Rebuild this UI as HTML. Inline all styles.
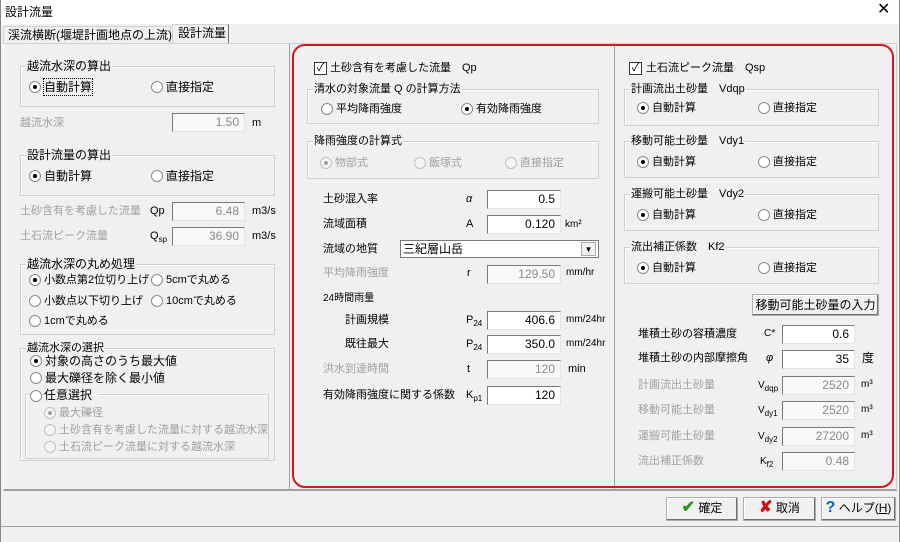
<!DOCTYPE html>
<html><head><meta charset="utf-8"><style>
*{box-sizing:border-box;margin:0;padding:0}
body{width:900px;height:542px;background:#f0f0f0;font-family:"Liberation Sans","Noto Sans CJK JP",sans-serif;font-size:11px;color:#000;position:relative;overflow:hidden}
.a{position:absolute;white-space:nowrap;line-height:16px}
.g{color:#a0a0a0}
.box{position:absolute;border:1px solid #d0d0d0;box-shadow:inset 1px 1px 0 #fff}
.lg{position:absolute;background:#f0f0f0;padding:0 1px;line-height:14px;white-space:nowrap}
.in{position:absolute;background:#fff;border:1px solid #7a7a7a;border-right-color:#e3e3e3;border-bottom-color:#e3e3e3;text-align:right;padding-right:5px;line-height:16px;height:19px;font-size:12px}
.in.d{color:#8a8a8a;background:#f8f8f8}
.r{position:absolute;width:12px;height:12px;border-radius:50%;border:1px solid #8a8a8a;background:#fff}
.r.on::after{content:"";position:absolute;left:3px;top:3px;width:4px;height:4px;border-radius:50%;background:#000}
.r.gd{border-color:#c0c0c0;background:#f4f4f4}
.r.gd.on::after{background:#a0a0a0}
.cb{position:absolute;width:13px;height:13px;border:1px solid #333;background:#fff;font-size:11px;line-height:11px;text-align:center}
.btn{position:absolute;border:1px solid #adadad;background:#f0f0f0;box-shadow:inset -1px -1px 0 #707070,inset 1px 1px 0 #fff;text-align:center;line-height:20px;font-size:12px}
</style></head><body>
<div style="position:absolute;left:0;top:0;width:900px;height:24px;background:#fff"></div>
<div class="a" style="left:5px;top:4px;font-size:12px">設計流量</div>
<div class="a" style="left:877px;top:2px;font-size:16px">✕</div>
<div style="position:absolute;left:0;top:0;width:1px;height:542px;background:#888"></div>
<div style="position:absolute;right:0;top:0;width:1px;height:542px;background:#888"></div>
<div style="position:absolute;left:3px;top:26px;width:168px;height:17px;border:1px solid #d0d0d0;border-bottom:none"></div>
<div class="a" style="left:8px;top:27px;font-size:12px">渓流横断(堰堤計画地点の上流)</div>
<div style="position:absolute;left:172px;top:24px;width:57px;height:20px;border:1px solid #d0d0d0;border-right:1px solid #707070;border-bottom:none;background:#f0f0f0"></div>
<div class="a" style="left:178px;top:25px;font-size:12px">設計流量</div>
<div style="position:absolute;left:3px;top:43px;width:894px;height:448px;border:1px solid #d0d0d0;border-bottom:2px solid #a0a0a0;border-left-color:#fff"></div>
<div style="position:absolute;left:289px;top:44px;width:1px;height:446px;background:#a0a0a0"></div>
<div style="position:absolute;left:614px;top:44px;width:1px;height:446px;background:#a0a0a0"></div>
<div style="position:absolute;left:292px;top:44px;width:602px;height:444px;border:2px solid #d9141c;border-radius:13px"></div>
<div style="position:absolute;left:0;top:526px;width:900px;height:1px;background:#a0a0a0"></div>

<div class="box" style="left:20px;top:66px;width:255px;height:41px"></div>
<div class="lg" style="left:26px;top:59px;font-size:12px">越流水深の算出</div>
<div class="r on" style="left:29px;top:81px"></div><div class="a" style="left:44px;top:79px;outline:1px dotted #000;font-size:12px">自動計算</div>
<div class="r" style="left:151px;top:81px"></div><div class="a" style="left:166px;top:79px;font-size:12px">直接指定</div>
<div class="a g" style="left:20px;top:115px">越流水深</div>
<div class="in d" style="left:172px;top:113px;width:73px">1.50</div><div class="a" style="left:252px;top:115px">m</div>

<div class="box" style="left:20px;top:155px;width:255px;height:41px"></div>
<div class="lg" style="left:26px;top:148px;font-size:12px">設計流量の算出</div>
<div class="r on" style="left:29px;top:170px"></div><div class="a" style="left:44px;top:168px;font-size:12px">自動計算</div>
<div class="r" style="left:151px;top:170px"></div><div class="a" style="left:166px;top:168px;font-size:12px">直接指定</div>
<div class="a g" style="left:20px;top:203px">土砂含有を考慮した流量</div><div class="a" style="left:150px;top:203px">Qp</div>
<div class="in d" style="left:172px;top:202px;width:73px">6.48</div><div class="a" style="left:252px;top:203px">m3/s</div>
<div class="a g" style="left:20px;top:228px">土石流ピーク流量</div><div class="a" style="left:150px;top:228px">Q<sub style="font-size:8px">sp</sub></div>
<div class="in d" style="left:172px;top:227px;width:73px">36.90</div><div class="a" style="left:252px;top:228px">m3/s</div>

<div class="box" style="left:20px;top:264px;width:255px;height:71px"></div>
<div class="lg" style="left:26px;top:257px;font-size:12px">越流水深の丸め処理</div>
<div class="r on" style="left:29px;top:274px"></div><div class="a" style="left:44px;top:272px">小数点第2位切り上げ</div>
<div class="r" style="left:151px;top:274px"></div><div class="a" style="left:166px;top:272px">5cmで丸める</div>
<div class="r" style="left:29px;top:295px"></div><div class="a" style="left:44px;top:293px">小数点以下切り上げ</div>
<div class="r" style="left:151px;top:295px"></div><div class="a" style="left:166px;top:293px">10cmで丸める</div>
<div class="r" style="left:29px;top:315px"></div><div class="a" style="left:44px;top:313px">1cmで丸める</div>

<div class="box" style="left:20px;top:348px;width:255px;height:113px"></div>
<div class="lg" style="left:26px;top:341px">越流水深の選択</div>
<div class="r on" style="left:30px;top:355px"></div><div class="a" style="left:45px;top:353px;font-size:12px">対象の高さのうち最大値</div>
<div class="r" style="left:30px;top:372px"></div><div class="a" style="left:45px;top:370px;font-size:12px">最大礫径を除く最小値</div>
<div class="box" style="left:25px;top:394px;width:244px;height:65px"></div>
<div class="r" style="left:30px;top:390px"></div><div class="a" style="left:44px;top:387px;background:#f0f0f0;padding-right:6px;font-size:12px">任意選択</div>
<div class="r gd on" style="left:44px;top:407px"></div><div class="a g" style="left:59px;top:405px">最大礫径</div>
<div class="r gd" style="left:44px;top:424px"></div><div class="a g" style="left:59px;top:422px">土砂含有を考慮した流量に対する越流水深</div>
<div class="r gd" style="left:44px;top:441px"></div><div class="a g" style="left:59px;top:439px">土石流ピーク流量に対する越流水深</div>

<div class="cb" style="left:314px;top:62px">✓</div><div class="a" style="left:330px;top:60px">土砂含有を考慮した流量　Qp</div>
<div class="box" style="left:307px;top:89px;width:292px;height:35px"></div>
<div class="lg" style="left:313px;top:82px">清水の対象流量 Q の計算方法</div>
<div class="r" style="left:321px;top:103px"></div><div class="a" style="left:336px;top:101px">平均降雨強度</div>
<div class="r on" style="left:461px;top:103px"></div><div class="a" style="left:476px;top:101px">有効降雨強度</div>
<div class="box" style="left:307px;top:141px;width:292px;height:38px"></div>
<div class="lg" style="left:313px;top:134px">降雨強度の計算式</div>
<div class="r gd on" style="left:320px;top:157px"></div><div class="a g" style="left:335px;top:155px">物部式</div>
<div class="r gd" style="left:414px;top:157px"></div><div class="a g" style="left:429px;top:155px">飯塚式</div>
<div class="r gd" style="left:505px;top:157px"></div><div class="a g" style="left:520px;top:155px">直接指定</div>

<div class="a" style="left:323px;top:191px">土砂混入率</div><div class="a" style="left:466px;top:191px;font-style:italic">α</div>
<div class="in" style="left:487px;top:190px;width:74px">0.5</div>
<div class="a" style="left:323px;top:216px">流域面積</div><div class="a" style="left:466px;top:216px">A</div>
<div class="in" style="left:487px;top:215px;width:74px">0.120</div><div class="a" style="left:565px;top:217px;font-size:10px">km²</div>
<div class="a" style="left:323px;top:241px">流域の地質</div>
<div style="position:absolute;left:400px;top:240px;width:199px;height:18px;background:#fff;border:1px solid #7a7a7a"></div>
<div class="a" style="left:403px;top:241px;font-size:12px">三紀層山岳</div>
<div style="position:absolute;left:581px;top:242px;width:15px;height:14px;background:#f0f0f0;border:1px solid #aaa;font-size:8px;text-align:center;line-height:13px">▼</div>
<div class="a g" style="left:323px;top:265px">平均降雨強度</div><div class="a" style="left:467px;top:265px">r</div>
<div class="in d" style="left:487px;top:265px;width:74px">129.50</div><div class="a" style="left:566px;top:265px;font-size:10px">mm/hr</div>
<div class="a" style="left:323px;top:291px;font-size:10px">24時間雨量</div>
<div class="a" style="left:345px;top:312px">計画規模</div><div class="a" style="left:466px;top:312px">P<sub style="font-size:8px">24</sub></div>
<div class="in" style="left:487px;top:311px;width:74px">406.6</div><div class="a" style="left:566px;top:312px;font-size:10px">mm/24hr</div>
<div class="a" style="left:345px;top:336px">既往最大</div><div class="a" style="left:466px;top:336px">P<sub style="font-size:8px">24</sub></div>
<div class="in" style="left:487px;top:335px;width:74px">350.0</div><div class="a" style="left:566px;top:336px;font-size:10px">mm/24hr</div>
<div class="a g" style="left:323px;top:361px">洪水到達時間</div><div class="a" style="left:467px;top:361px">t</div>
<div class="in d" style="left:487px;top:360px;width:74px">120</div><div class="a" style="left:568px;top:361px">min</div>
<div class="a" style="left:323px;top:387px">有効降雨強度に関する係数</div><div class="a" style="left:466px;top:387px">K<sub style="font-size:8px">p1</sub></div>
<div class="in" style="left:487px;top:386px;width:74px">120</div>

<div class="cb" style="left:629px;top:62px">✓</div><div class="a" style="left:646px;top:60px">土石流ピーク流量　Qsp</div>
<div class="box" style="left:624px;top:89px;width:255px;height:37px"></div><div class="lg" style="left:630px;top:82px">計画流出土砂量　Vdqp</div>
<div class="r on" style="left:637px;top:102px"></div><div class="a" style="left:652px;top:100px">自動計算</div><div class="r" style="left:758px;top:102px"></div><div class="a" style="left:773px;top:100px">直接指定</div>
<div class="box" style="left:624px;top:141px;width:255px;height:37px"></div><div class="lg" style="left:630px;top:134px">移動可能土砂量　Vdy1</div>
<div class="r on" style="left:637px;top:156px"></div><div class="a" style="left:652px;top:154px">自動計算</div><div class="r" style="left:758px;top:156px"></div><div class="a" style="left:773px;top:154px">直接指定</div>
<div class="box" style="left:624px;top:194px;width:255px;height:37px"></div><div class="lg" style="left:630px;top:187px">運搬可能土砂量　Vdy2</div>
<div class="r on" style="left:637px;top:209px"></div><div class="a" style="left:652px;top:207px">自動計算</div><div class="r" style="left:758px;top:209px"></div><div class="a" style="left:773px;top:207px">直接指定</div>
<div class="box" style="left:624px;top:247px;width:255px;height:37px"></div><div class="lg" style="left:630px;top:240px">流出補正係数　Kf2</div>
<div class="r on" style="left:637px;top:262px"></div><div class="a" style="left:652px;top:260px">自動計算</div><div class="r" style="left:758px;top:262px"></div><div class="a" style="left:773px;top:260px">直接指定</div>
<div class="btn" style="left:752px;top:294px;width:127px;height:22px">移動可能土砂量の入力</div>
<div class="a" style="left:638px;top:326px">堆積土砂の容積濃度</div><div class="a" style="left:764px;top:326px;font-size:10px">C*</div>
<div class="in" style="left:782px;top:325px;width:73px">0.6</div>
<div class="a" style="left:638px;top:350px">堆積土砂の内部摩擦角</div><div class="a" style="left:766px;top:350px;font-style:italic">φ</div>
<div class="in" style="left:782px;top:350px;width:73px">35</div><div class="a" style="left:862px;top:350px;font-size:12px">度</div>
<div class="a g" style="left:638px;top:377px">計画流出土砂量</div><div class="a" style="left:758px;top:378px;font-size:10px">V<sub style="font-size:8px">dqp</sub></div>
<div class="in d" style="left:782px;top:376px;width:73px">2520</div><div class="a" style="left:861px;top:377px;font-size:10px">m³</div>
<div class="a g" style="left:638px;top:402px">移動可能土砂量</div><div class="a" style="left:758px;top:403px;font-size:10px">V<sub style="font-size:8px">dy1</sub></div>
<div class="in d" style="left:782px;top:401px;width:73px">2520</div><div class="a" style="left:861px;top:402px;font-size:10px">m³</div>
<div class="a g" style="left:638px;top:428px">運搬可能土砂量</div><div class="a" style="left:758px;top:429px;font-size:10px">V<sub style="font-size:8px">dy2</sub></div>
<div class="in d" style="left:782px;top:427px;width:73px">27200</div><div class="a" style="left:861px;top:428px;font-size:10px">m³</div>
<div class="a g" style="left:638px;top:453px">流出補正係数</div><div class="a" style="left:760px;top:454px;font-size:10px">K<sub style="font-size:8px">f2</sub></div>
<div class="in d" style="left:782px;top:452px;width:73px">0.48</div>

<div class="btn" style="left:666px;top:497px;width:72px;height:24px"><span style="color:#2a9a1a;font-weight:bold;font-size:16px">✔</span> 確定</div>
<div class="btn" style="left:743px;top:497px;width:73px;height:24px"><span style="color:#d01010;font-weight:bold;font-size:16px">✘</span> 取消</div>
<div class="btn" style="left:821px;top:497px;width:75px;height:24px"><span style="color:#1060d0;font-weight:bold;font-size:16px">?</span> ヘルプ(<u>H</u>)</div>
</body></html>
